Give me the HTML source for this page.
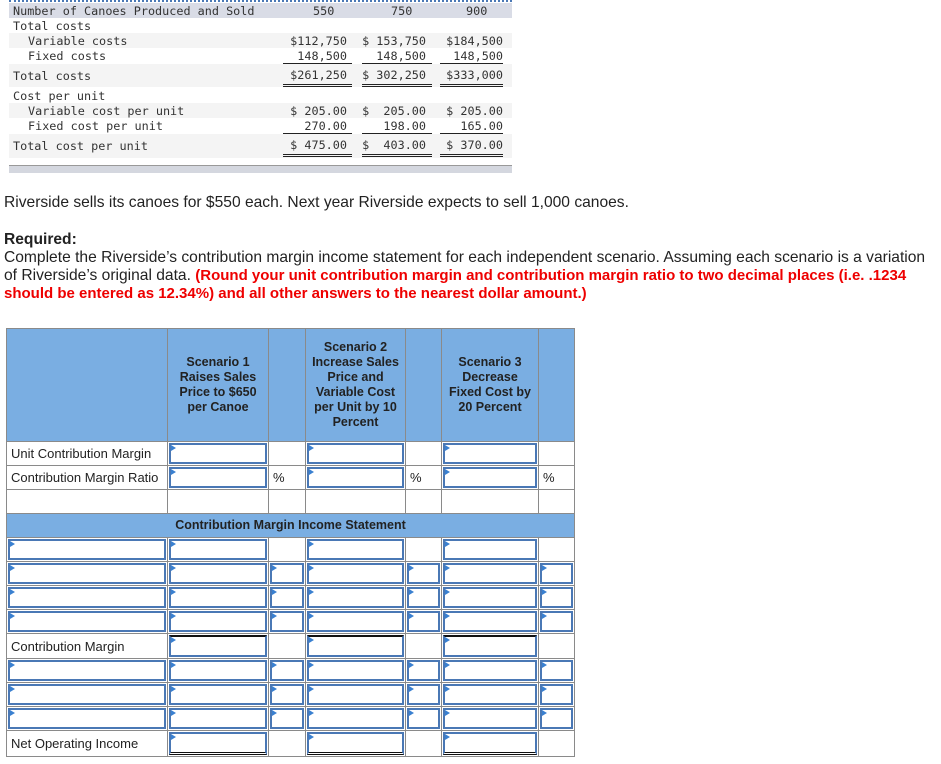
<!DOCTYPE html>
<html><head><meta charset="utf-8"><style>
body{margin:0;width:941px;height:764px;background:#fff;position:relative;overflow:hidden;font-family:"Liberation Sans",Arial,sans-serif}
.m{position:absolute;font-family:"DejaVu Sans Mono","Liberation Mono",monospace;font-size:11.8px;color:#333;white-space:pre;line-height:14px}
.bg{position:absolute;left:9px;width:503px}
.r{text-align:right}
.ul{position:absolute;height:0;border-top:1px solid #222}
.dl{position:absolute;height:1px;border-top:1px solid #222;border-bottom:1px solid #222}
table{position:absolute;left:6px;top:328px;border-collapse:collapse;table-layout:fixed;font-size:13px}
td{border:1px solid #8a8a8a;padding:0;height:23px;position:relative;color:#222}
th{background:#7aaee2;border:1px solid #8a8a8a;font-weight:bold;font-size:12.5px;color:#222;line-height:15px;padding:0}
.i{position:absolute;left:1px;top:1px;right:1px;bottom:1px;border:2px solid #4a78b5;background:#fff}
.i:before{content:"";position:absolute;left:0;top:0;border-left:5px solid #3a80d0;border-top:3px solid transparent;border-bottom:3px solid transparent}
.tb .i{border-top:2px solid #111}
.bb .i{border-bottom:3px double #111}
.lb{padding-left:4px}
</style></head><body>
<div style="position:absolute;left:9px;top:0;width:503px;border-top:2px dotted #4a78b5"></div>
<div class="bg" style="top:3px;height:15px;background:#d9dce6"></div>
<div class="bg" style="top:33px;height:15px;background:#f4f4f4"></div>
<div class="bg" style="top:64px;height:23px;background:#f4f4f4"></div>
<div class="bg" style="top:103px;height:15px;background:#f4f4f4"></div>
<div class="bg" style="top:134px;height:24px;background:#f4f4f4"></div>
<div class="bg" style="top:165px;height:7px;background:#d4d7df;border-top:1px solid #999"></div>
<div class="m" style="left:13px;top:4px">Number of Canoes Produced and Sold</div>
<div class="m" style="left:313px;top:4px">550</div><div class="m" style="left:391px;top:4px">750</div><div class="m" style="left:466px;top:4px">900</div>
<div class="m" style="left:13px;top:19px">Total costs</div>
<div class="m" style="left:28px;top:34px">Variable costs</div>
<div class="m" style="left:28px;top:49px">Fixed costs</div>
<div class="m" style="left:13px;top:69px">Total costs</div>
<div class="m" style="left:13px;top:89px">Cost per unit</div>
<div class="m" style="left:28px;top:104px">Variable cost per unit</div>
<div class="m" style="left:28px;top:119px">Fixed cost per unit</div>
<div class="m" style="left:13px;top:139px">Total cost per unit</div>
<div class="m r" style="left:270px;width:77px;top:34px">$112,750</div>
<div class="m r" style="left:350px;width:76px;top:34px">$ 153,750</div>
<div class="m r" style="left:430px;width:73px;top:34px">$184,500</div>
<div class="m r" style="left:270px;width:77px;top:49px">148,500</div>
<div class="m r" style="left:350px;width:76px;top:49px">148,500</div>
<div class="m r" style="left:430px;width:73px;top:49px">148,500</div>
<div class="m r" style="left:270px;width:77px;top:68px">$261,250</div>
<div class="m r" style="left:350px;width:76px;top:68px">$ 302,250</div>
<div class="m r" style="left:430px;width:73px;top:68px">$333,000</div>
<div class="m r" style="left:270px;width:77px;top:104px">$ 205.00</div>
<div class="m r" style="left:350px;width:76px;top:104px">$  205.00</div>
<div class="m r" style="left:430px;width:73px;top:104px">$ 205.00</div>
<div class="m r" style="left:270px;width:77px;top:119px">270.00</div>
<div class="m r" style="left:350px;width:76px;top:119px">198.00</div>
<div class="m r" style="left:430px;width:73px;top:119px">165.00</div>
<div class="m r" style="left:270px;width:77px;top:138px">$ 475.00</div>
<div class="m r" style="left:350px;width:76px;top:138px">$  403.00</div>
<div class="m r" style="left:430px;width:73px;top:138px">$ 370.00</div>
<div class="ul" style="left:283px;width:69px;top:63px"></div><div class="ul" style="left:362px;width:70px;top:63px"></div><div class="ul" style="left:440px;width:63px;top:63px"></div>
<div class="dl" style="left:283px;width:69px;top:84px"></div><div class="dl" style="left:362px;width:70px;top:84px"></div><div class="dl" style="left:440px;width:63px;top:84px"></div>
<div class="ul" style="left:283px;width:69px;top:133px"></div><div class="ul" style="left:362px;width:70px;top:133px"></div><div class="ul" style="left:440px;width:63px;top:133px"></div>
<div class="dl" style="left:283px;width:69px;top:154px"></div><div class="dl" style="left:362px;width:70px;top:154px"></div><div class="dl" style="left:440px;width:63px;top:154px"></div>

<div style="position:absolute;left:4px;top:194px;font-size:15.6px;color:#222">Riverside sells its canoes for $550 each. Next year Riverside expects to sell 1,000 canoes.</div>
<div style="position:absolute;left:4px;top:231px;width:935px;font-size:15.6px;color:#222;line-height:18px"><b>Required:</b><br>Complete the Riverside’s contribution margin income statement for each independent scenario. Assuming each scenario is a variation of Riverside’s original data. <b style="color:#e00;font-size:15px">(Round your unit contribution margin and contribution margin ratio to two decimal places (i.e. .1234 should be entered as 12.34%) and all other answers to the nearest dollar amount.)</b></div>

<table>
<colgroup><col style="width:161px"><col style="width:101px"><col style="width:37px"><col style="width:100px"><col style="width:36px"><col style="width:97px"><col style="width:36px"></colgroup>
<tr><th style="height:112px"></th><th>Scenario 1<br>Raises Sales<br>Price to $650<br>per Canoe</th><th></th><th>Scenario 2<br>Increase Sales<br>Price and<br>Variable Cost<br>per Unit by 10<br>Percent</th><th></th><th>Scenario 3<br>Decrease<br>Fixed Cost by<br>20 Percent</th><th></th></tr>
<tr><td class="lb">Unit Contribution Margin</td><td><div class="i"></div></td><td></td><td><div class="i"></div></td><td></td><td><div class="i"></div></td><td></td></tr>
<tr><td class="lb">Contribution Margin Ratio</td><td><div class="i"></div></td><td class="lb">%</td><td><div class="i"></div></td><td class="lb">%</td><td><div class="i"></div></td><td class="lb">%</td></tr>
<tr><td></td><td></td><td></td><td></td><td></td><td></td><td></td></tr>
<tr><th colspan="7" style="height:23px">Contribution Margin Income Statement</th></tr>
<tr><td><div class="i"></div></td><td><div class="i"></div></td><td></td><td><div class="i"></div></td><td></td><td><div class="i"></div></td><td></td></tr>
<tr><td><div class="i"></div></td><td><div class="i"></div></td><td><div class="i"></div></td><td><div class="i"></div></td><td><div class="i"></div></td><td><div class="i"></div></td><td><div class="i"></div></td></tr>
<tr><td><div class="i"></div></td><td><div class="i"></div></td><td><div class="i"></div></td><td><div class="i"></div></td><td><div class="i"></div></td><td><div class="i"></div></td><td><div class="i"></div></td></tr>
<tr><td><div class="i"></div></td><td><div class="i"></div></td><td><div class="i"></div></td><td><div class="i"></div></td><td><div class="i"></div></td><td><div class="i"></div></td><td><div class="i"></div></td></tr>
<tr class="tb"><td class="lb" style="height:24px">Contribution Margin</td><td><div class="i"></div></td><td></td><td><div class="i"></div></td><td></td><td><div class="i"></div></td><td></td></tr>
<tr><td><div class="i"></div></td><td><div class="i"></div></td><td><div class="i"></div></td><td><div class="i"></div></td><td><div class="i"></div></td><td><div class="i"></div></td><td><div class="i"></div></td></tr>
<tr><td><div class="i"></div></td><td><div class="i"></div></td><td><div class="i"></div></td><td><div class="i"></div></td><td><div class="i"></div></td><td><div class="i"></div></td><td><div class="i"></div></td></tr>
<tr><td><div class="i"></div></td><td><div class="i"></div></td><td><div class="i"></div></td><td><div class="i"></div></td><td><div class="i"></div></td><td><div class="i"></div></td><td><div class="i"></div></td></tr>
<tr class="bb"><td class="lb" style="height:25px">Net Operating Income</td><td><div class="i"></div></td><td></td><td><div class="i"></div></td><td></td><td><div class="i"></div></td><td></td></tr>
</table>
</body></html>
